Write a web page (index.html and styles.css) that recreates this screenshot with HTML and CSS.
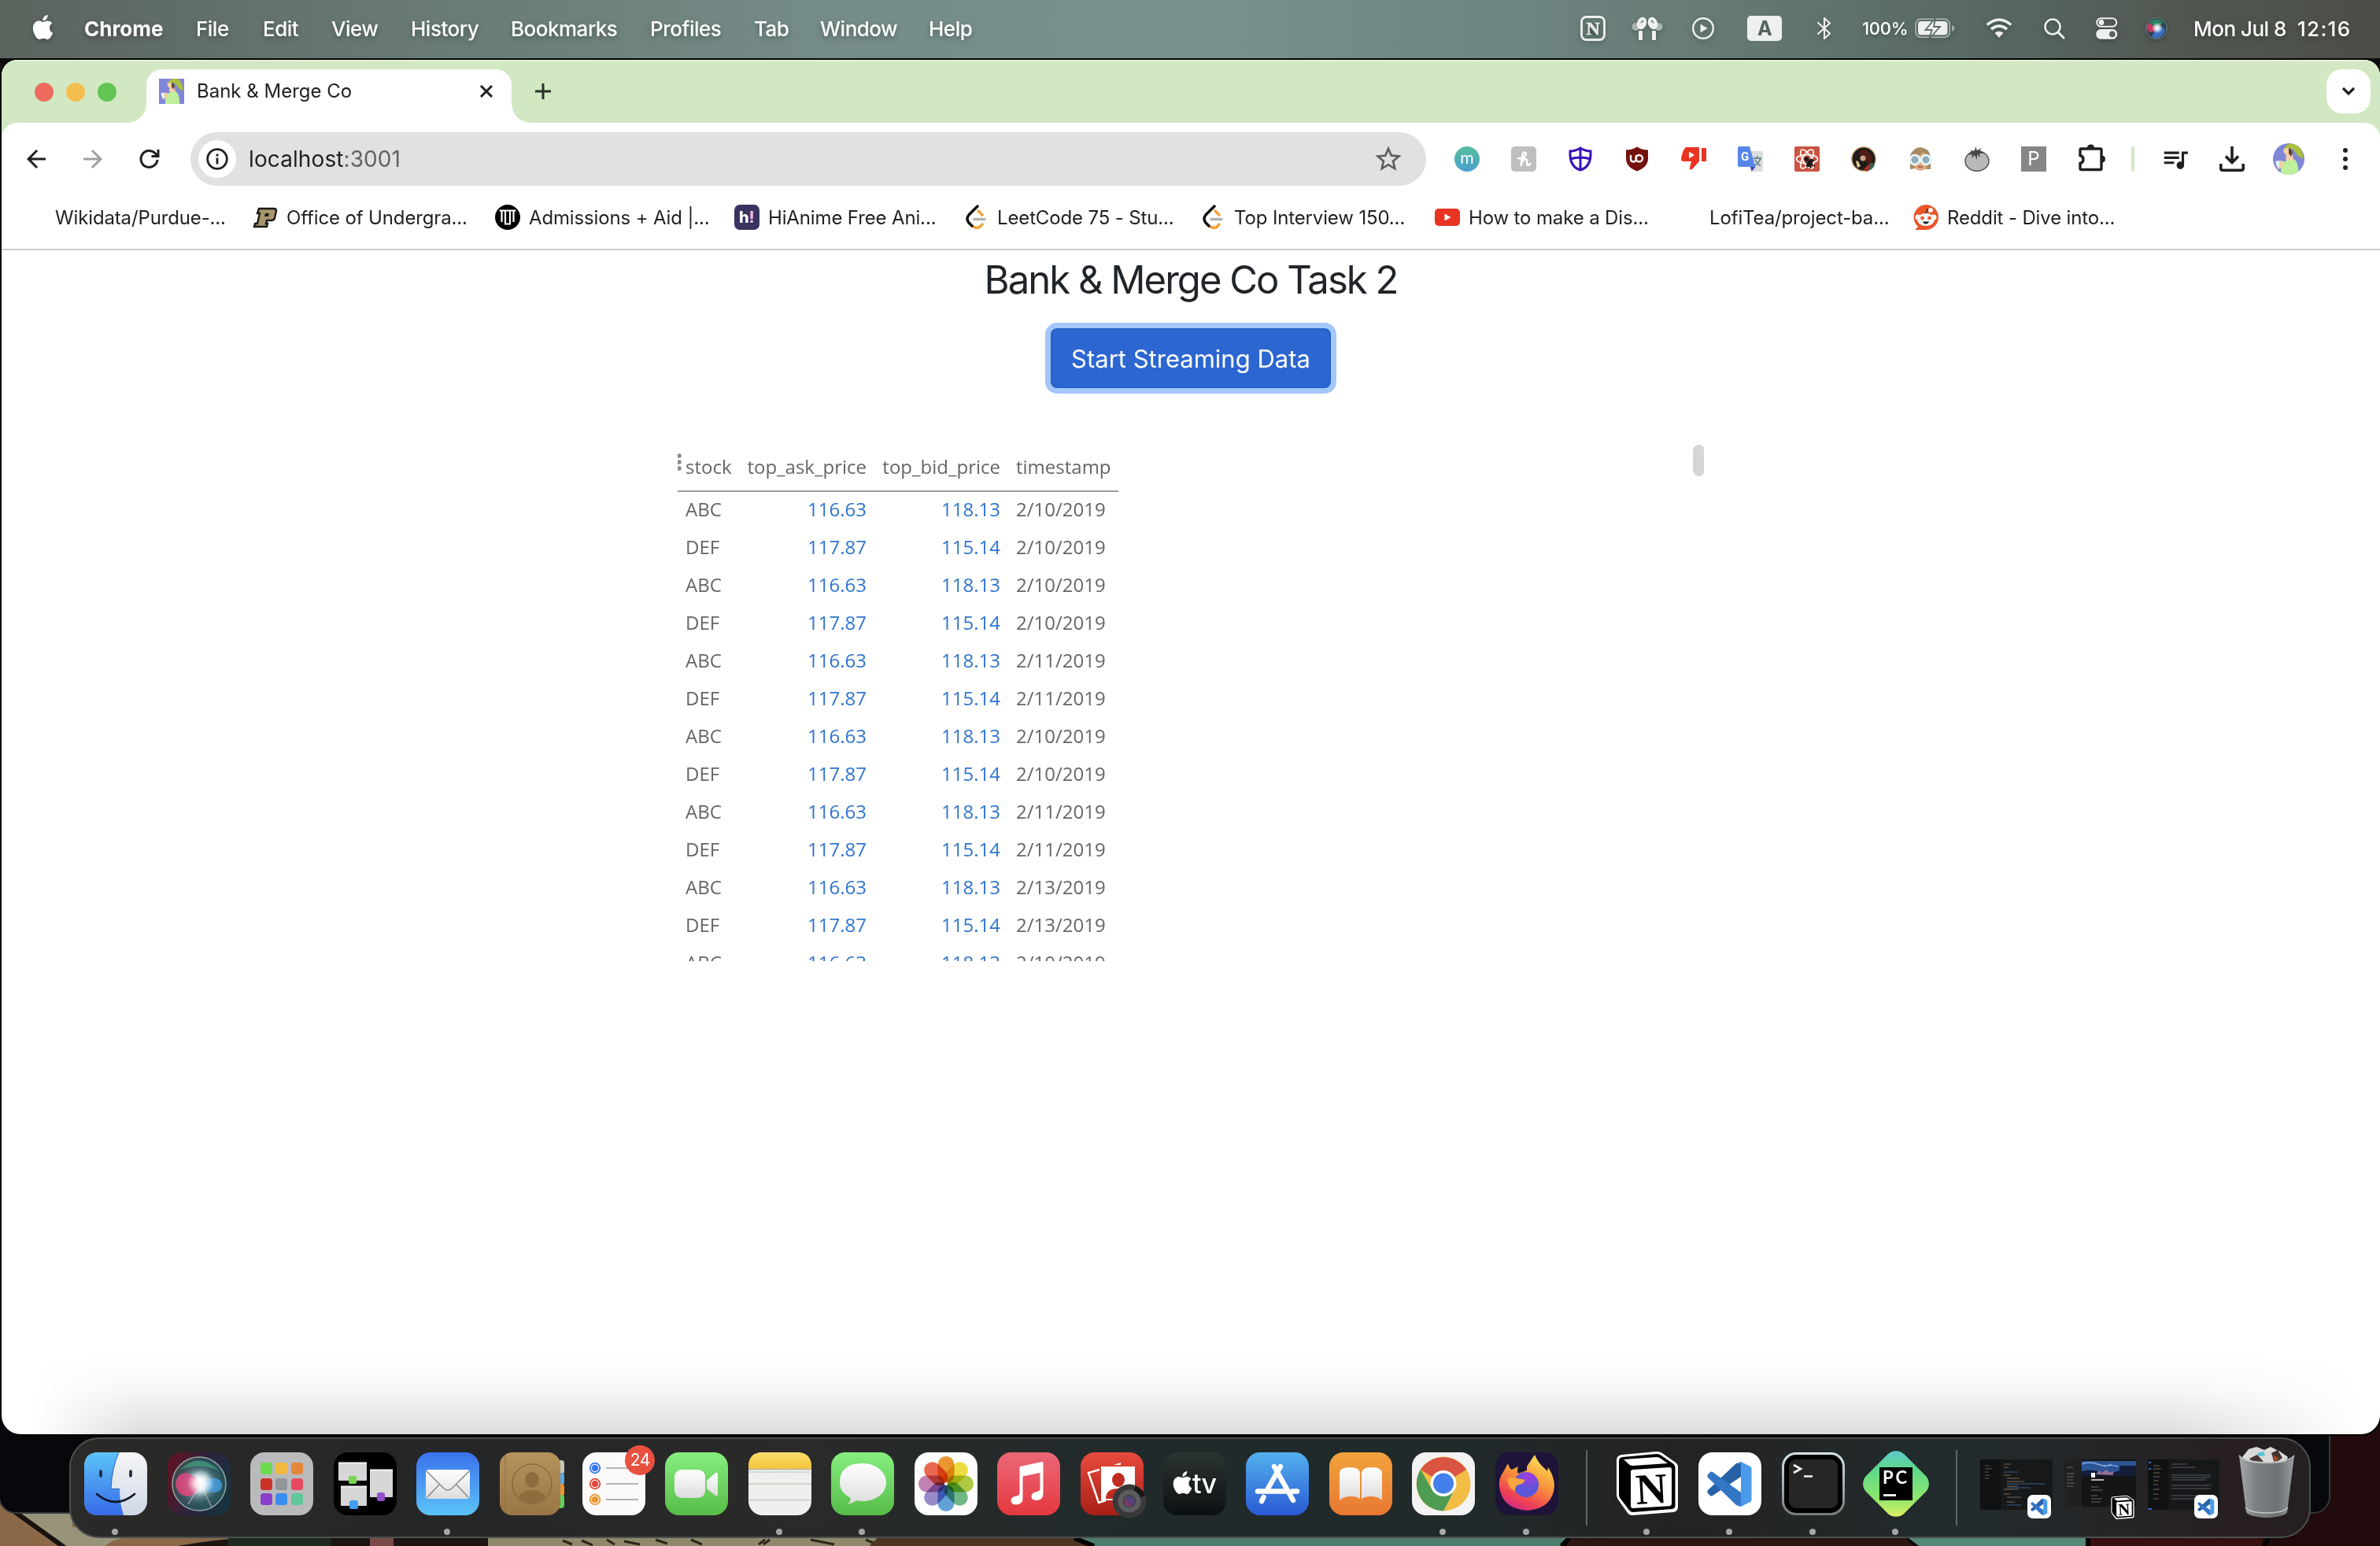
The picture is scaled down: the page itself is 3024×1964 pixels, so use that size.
FILE: index.html
```html
<!DOCTYPE html>
<html lang="en">
<head>
<meta charset="utf-8">
<title>Bank &amp; Merge Co</title>
<link rel="stylesheet" href="styles.css">
</head>
<body>
<svg class="defs" width="0" height="0">
  <defs>
    <linearGradient id="gBlueUp" x1="0" y1="0" x2="0" y2="1"><stop offset="0" stop-color="#3a72ec"/><stop offset="1" stop-color="#5cc3f7"/></linearGradient>
    <linearGradient id="gBlueDown" x1="0" y1="0" x2="0" y2="1"><stop offset="0" stop-color="#5cc3f7"/><stop offset="1" stop-color="#376bea"/></linearGradient>
    <linearGradient id="gGreen" x1="0" y1="0" x2="0" y2="1"><stop offset="0" stop-color="#86ee7f"/><stop offset="1" stop-color="#57bd48"/></linearGradient>
    <linearGradient id="gWhite" x1="0" y1="0" x2="0" y2="1"><stop offset="0" stop-color="#ffffff"/><stop offset="1" stop-color="#dcdcdc"/></linearGradient>
    <linearGradient id="gFace" x1="0" y1="0" x2="0" y2="1"><stop offset="0" stop-color="#f5f5f7"/><stop offset="1" stop-color="#cfd8e6"/></linearGradient>
    <linearGradient id="gBrown" x1="0" y1="0" x2="0" y2="1"><stop offset="0" stop-color="#b5935c"/><stop offset="1" stop-color="#9a7546"/></linearGradient>
    <linearGradient id="gYellow" x1="0" y1="0" x2="0" y2="1"><stop offset="0" stop-color="#f9dc6c"/><stop offset="1" stop-color="#f5c437"/></linearGradient>
    <linearGradient id="gMusic" x1="0" y1="0" x2="0" y2="1"><stop offset="0" stop-color="#ea6878"/><stop offset="1" stop-color="#e5383f"/></linearGradient>
    <linearGradient id="gRed" x1="0" y1="0" x2="0" y2="1"><stop offset="0" stop-color="#e84a3c"/><stop offset="1" stop-color="#a81f16"/></linearGradient>
    <linearGradient id="gTv" x1="0" y1="0" x2="0" y2="1"><stop offset="0" stop-color="#2b3431"/><stop offset="1" stop-color="#0c1012"/></linearGradient>
    <linearGradient id="gOrange" x1="0" y1="0" x2="0" y2="1"><stop offset="0" stop-color="#f1a23b"/><stop offset="1" stop-color="#e97833"/></linearGradient>
    <linearGradient id="gStore" x1="0" y1="0" x2="0" y2="1"><stop offset="0" stop-color="#52b2ee"/><stop offset="1" stop-color="#2a58d4"/></linearGradient>
    <linearGradient id="gSiri" x1="0" y1="0.3" x2="1" y2="0.7"><stop offset="0" stop-color="#5d1424"/><stop offset=".5" stop-color="#2c2440"/><stop offset="1" stop-color="#17333f"/></linearGradient>
    <radialGradient id="gOrb"><stop offset="0" stop-color="#ffffff"/><stop offset=".25" stop-color="#b9e0e6" stop-opacity=".9"/><stop offset=".7" stop-color="#3f7f7d" stop-opacity=".6"/><stop offset="1" stop-color="#2a6a66" stop-opacity=".5"/></radialGradient>
    <radialGradient id="gGlow"><stop offset="0" stop-color="#fff"/><stop offset=".35" stop-color="#fff" stop-opacity=".85"/><stop offset="1" stop-color="#fff" stop-opacity="0"/></radialGradient>
    <linearGradient id="gFox" x1="0.8" y1="0" x2="0.3" y2="1"><stop offset="0" stop-color="#fde75a"/><stop offset=".45" stop-color="#f7953a"/><stop offset=".8" stop-color="#ee4253"/><stop offset="1" stop-color="#cf2a86"/></linearGradient>
    <radialGradient id="gFoxIn" cx=".6" cy=".2"><stop offset="0" stop-color="#a63be0"/><stop offset="1" stop-color="#5b56d8"/></radialGradient>
    <linearGradient id="gPc" x1="0" y1="0" x2="1" y2="1"><stop offset="0" stop-color="#5bc2dd"/><stop offset=".3" stop-color="#5fd98c"/><stop offset=".7" stop-color="#8de66c"/><stop offset="1" stop-color="#f5f35c"/></linearGradient>
    <linearGradient id="gTerm" x1="0" y1="0" x2="0" y2="1"><stop offset="0" stop-color="#d5e6ee"/><stop offset="1" stop-color="#77797b"/></linearGradient>
    <linearGradient id="gTeal" x1="0" y1="0" x2="0" y2="1"><stop offset="0" stop-color="#55bd9c"/><stop offset="1" stop-color="#4aa0cf"/></linearGradient>
    <linearGradient id="gTrash" x1="0" y1="0" x2="1" y2="0"><stop offset="0" stop-color="#a5a9ab"/><stop offset=".3" stop-color="#7d8183"/><stop offset=".7" stop-color="#6d7173"/><stop offset="1" stop-color="#999d9f"/></linearGradient>
    <symbol id="apple" viewBox="0 0 24 24"><path d="M12.152 6.896c-.948 0-2.415-1.078-3.960-1.040-2.040.027-3.910 1.183-4.961 3.014-2.117 3.675-.546 9.103 1.519 12.090 1.013 1.454 2.208 3.090 3.792 3.039 1.520-.065 2.090-.987 3.935-.987 1.831 0 2.350.987 3.960.948 1.637-.026 2.676-1.480 3.676-2.948 1.156-1.688 1.636-3.325 1.662-3.415-.039-.013-3.182-1.221-3.220-4.857-.026-3.040 2.480-4.494 2.597-4.559-1.429-2.090-3.623-2.324-4.390-2.376-2-.156-3.675 1.090-4.610 1.090zM15.530 3.830c.843-1.012 1.400-2.427 1.245-3.830-1.207.052-2.662.805-3.532 1.818-.78.896-1.454 2.338-1.273 3.714 1.338.104 2.715-.688 3.559-1.701"/></symbol>
    <symbol id="vscode" viewBox="0 0 80 80"><rect width="80" height="80" rx="18" fill="#fff"/><path d="M12 48L48 14l6-1v18L18 55q-2 1-3 0l-3-3q-1.500-2 0-4z" fill="#2762a6"/><path d="M12 32q-1.500-2 0-4l3-3q2-1 3 0L54 51v18l-6-2z" fill="#3476c6"/><path d="M54 12l12 6q1.500 1 1.500 3v39q0 2-1.500 3l-12 6q-2 .5-3-1.500 3 1 3-3V16.500q0-4-3-3 1-2 3-1.500z" fill="#4a9aea"/></symbol>
    <symbol id="notion" viewBox="0 0 80 84"><path d="M8 5l44-4q4 0 7 2l17 12q3 2 3 6v50q0 6-6 7l-52 4q-4 0-6-3L3 62q-2-3-2-6V12q0-6 7-7z" fill="#fff"/><path d="M9 8l43-4q3 0 5 1.500l16 11q2.500 2 2.500 5v48q0 4-4 4.500L22 78q-3 0-5-2.500L6 61q-2-2-2-5V13q0-4.500 5-5z" fill="#000"/><path d="M10 11l42-3q2 0 4 1.200L66 16l-44 3q-3 0-5-1.500z" fill="#fff"/><path d="M22 24l46-3q3 0 3 3v43q0 3-3 3.200L22 73q-3 0-3-3V27q0-3 3-3z" fill="#fff"/><text x="45" y="67" font-family="Liberation Serif, serif" font-weight="700" font-size="55" text-anchor="middle" transform="rotate(-3 45 48)">N</text></symbol>
    <symbol id="avatar" viewBox="0 0 40 40"><rect width="40" height="40" fill="#7f86d8"/><path d="M10 40q-1-15 7-18l9-2q6 2 7 20z" fill="#bdf09a"/><path d="M5 24q5-3 9-1l-2 8-6 2z" fill="#f3cfa6"/><path d="M13 8q6-5 11 0l2 13q-8 3-10-1l1-5q-4-3-4-7z" fill="#f3cfa6"/><path d="M14 6Q24-6 32 2q7 8 6 17-6-1-9-7-4-6-8-6-4 0-7 1z" fill="#a9bf3d"/><path d="M20 6q4 1 5 6l-2 5-3-4z" fill="#5b4636"/><path d="M3 23l5-1v8H5z" fill="#e5f5ff"/></symbol>
    <symbol id="leet" viewBox="0 0 32 32"><path d="M19 8l5 5M24 25q-5 7-11 3" fill="none" stroke="#f0a23a" stroke-width="3.500" stroke-linecap="round"/><path d="M14 18.500h13" stroke="#b3b3b3" stroke-width="3.600" stroke-linecap="round"/><path d="M18 2L7 13q-4 5 0 10l4 4" fill="none" stroke="#111" stroke-width="3.500" stroke-linecap="round"/></symbol>
  </defs>
</svg>

<svg class="wallpaper" viewBox="0 0 3024 1964">
  <rect width="3024" height="1964" fill="#0b0a0c"/>
  <rect y="80" width="4" height="120" fill="#1b1413"/><rect y="200" width="4" height="220" fill="#52685f"/>
  <rect y="1900" width="420" height="64" fill="#8b6848"/>
  <path d="M20 1922H92V1940L170 1950 120 1964H80z" fill="#97947a"/><path d="M18 1920l64 46" stroke="#17120d" stroke-width="6"/>
  <path d="M90 1950h65l-22 14H90z" fill="#97947a"/>
  <path d="M225 1964q60-10 90-10h400v10z" fill="#1c1514"/><path d="M290 1954h130v10H290z" fill="#1e2a20"/><path d="M470 1954h30v10h-30z" fill="#7a4b47"/>
  <path d="M620 1954H1115l-10 10H620z" fill="#8f896c"/>
  <path d="M715 1957l12 5m12-5l14 6m18-7l10 6m12-4l20 4m20-6l15 5m30-5l14 6m80-6l-8 6m14-6l-8 6m60-6l30 6m40-6l14 6" stroke="#2c271c" stroke-width="3"/>
  <path d="M1115 1954h275v10h-285z" fill="#4e3421"/>
  <path d="M1365 1954H1995l-12 10H1390z" fill="#4d7e70"/><path d="M1365 1954l25 10M1996 1952l-12 12" stroke="#000" stroke-width="6"/>
  <path d="M1996 1954h425l10 10H1990z" fill="#2b170f"/>
  <path d="M2425 1954h225v10h-212z" fill="#55897a"/><path d="M2650 1950h6v14h-6z" fill="#000"/>
  <path d="M2656 1954h370v10h-370z" fill="#35100f"/>
  <path d="M2900 1780h124v184h-150z" fill="#210a0b"/><path d="M2884 1952l-8 12" stroke="#000" stroke-width="5"/>
</svg>
<div class="back-window"></div>

<header class="menubar">
  <svg class="m-apple" width="31" height="31" fill="#fff"><use href="#apple"/></svg>
  <b>Chrome</b><span>File</span><span>Edit</span><span>View</span><span>History</span><span>Bookmarks</span><span>Profiles</span><span>Tab</span><span>Window</span><span>Help</span>
  <svg width="32" height="32" viewBox="0 0 32 32"><rect x="1.500" y="1.500" width="29" height="29" rx="6" fill="none" stroke="#eef0ef" stroke-width="2.800"/><text x="16" y="24" text-anchor="middle" font-family="Liberation Serif, serif" font-weight="700" font-size="24" fill="#eef0ef" stroke="#eef0ef" stroke-width=".6">N</text></svg>
  <svg width="42" height="34" viewBox="0 0 42 34"><g fill="#a9b5b1"><circle cx="6.500" cy="15" r="5"/><circle cx="35.500" cy="15" r="5"/></g><g fill="#eef0ef"><ellipse cx="14" cy="10.500" rx="6" ry="8" transform="rotate(20 14 10.500)"/><ellipse cx="28" cy="10.500" rx="6" ry="8" transform="rotate(-20 28 10.500)"/><rect x="10" y="20" width="5" height="12" rx="1"/><rect x="27" y="20" width="5" height="12" rx="1"/></g><path d="M13 10l3-3M29 10l-3-3" stroke="#5d6e69" stroke-width="1.500"/></svg>
  <svg width="28" height="28" viewBox="0 0 28 28"><circle cx="14" cy="14" r="12.800" fill="none" stroke="#eef0ef" stroke-width="2.400"/><path d="M10.500 8.500v11l9-5.500z" fill="#eef0ef"/></svg>
  <div class="input-key">A</div>
  <svg width="18" height="30" viewBox="0 0 18 30"><path d="M1 8l15 13.500L9 28V2l7 6.500L1 22" fill="none" stroke="#eef0ef" stroke-width="2.200" stroke-linejoin="round" stroke-linecap="round"/></svg>
  <span class="percent">100%</span>
  <svg width="52" height="26" viewBox="0 0 52 26"><rect x="1.200" y="1.200" width="43" height="23" rx="6.500" fill="none" stroke="#a3aca9" stroke-width="2"/><path d="M47 9q4 1.500 3.500 4 0 2.500-3.500 4z" fill="#a3aca9"/><rect x="4" y="4" width="37.500" height="17.500" rx="4" fill="#eef0ef"/><path d="M26 0L13.500 15h8L18.500 26 32 11h-8z" fill="#eef0ef" stroke="#5d6b67" stroke-width="1.800"/></svg>
  <svg width="34" height="26" viewBox="0 0 34 26"><path d="M1.800 8.500q15.200-13 30.400 0M7 14q10-8 20 0" fill="none" stroke="#eef0ef" stroke-width="3.600"/><path d="M11.500 18.700q5.500-4 11 0L17 25z" fill="#eef0ef"/></svg>
  <svg width="27" height="27" viewBox="0 0 27 27"><circle cx="11" cy="11" r="9.500" fill="none" stroke="#eef0ef" stroke-width="2.500"/><path d="M18 18l7 7" stroke="#eef0ef" stroke-width="3" stroke-linecap="round"/></svg>
  <svg width="28" height="28" viewBox="0 0 28 28"><rect x="1.200" y="1.200" width="25" height="10.600" rx="5.300" fill="none" stroke="#eef0ef" stroke-width="2"/><circle cx="7" cy="6.500" r="3.400" fill="#eef0ef"/><rect x=".2" y="15" width="27" height="12.800" rx="6.400" fill="#eef0ef"/><circle cx="20.800" cy="21.400" r="3.800" fill="#5a6561"/></svg>
  <svg width="28" height="28" viewBox="0 0 28 28"><circle cx="14" cy="14" r="13.400" fill="#32414f" stroke="#7e9596" stroke-width=".8"/><path d="M14 14q-5 8-11 3-4-6 2-10z" fill="#c23a62"/><path d="M14 14L5 6a13 13 0 0 1 18 0z" fill="#2c8262"/><path d="M14 14q8-4 11 2-2 8-9 10-6 1-8-2z" fill="#3a6fc2"/><circle cx="15" cy="13.500" r="7" fill="url(#gGlow)"/></svg>
  <span class="date">Mon Jul 8</span><span class="clock">12:16</span>
</header>

<section class="window">
  <div class="tabstrip">
    <div class="lights"><i class="red"></i><i class="amber"></i><i class="green"></i></div>
    <div class="tab"><svg width="32" height="32"><use href="#avatar"/></svg><span>Bank &amp; Merge Co</span>
      <svg class="close" width="18" height="18" viewBox="0 0 18 18"><path d="M2 2l14 14M16 2L2 16" stroke="#1f2023" stroke-width="3"/></svg></div>
    <svg class="plus" width="22" height="22" viewBox="0 0 22 22"><path d="M11 1v20M1 11h20" stroke="#2b3029" stroke-width="3"/></svg>
    <div class="tabsearch"><svg width="18" height="12" viewBox="0 0 18 12"><path d="M2 2l7 7 7-7" fill="none" stroke="#1f2023" stroke-width="3.200"/></svg></div>
  </div>

  <div class="toolbar">
    <div class="slot"><svg width="36" height="36" viewBox="0 0 24 24"><path fill="#1f2023" d="M20 11H7.830l5.590-5.590L12 4l-8 8 8 8 1.410-1.410L7.830 13H20v-2z"/></svg></div>
    <div class="slot"><svg width="36" height="36" viewBox="0 0 24 24"><path fill="#a0a0a0" d="M4 13h12.170l-5.590 5.590L12 20l8-8-8-8-1.410 1.410L16.170 11H4z"/></svg></div>
    <div class="slot"><svg width="26" height="26" viewBox="0 0 26 26"><path d="M23 14a10.500 10.500 0 1 1-3-8.500l3 3" fill="none" stroke="#1f2023" stroke-width="3"/><path d="M25.500 1v10h-10V8h7V1z" fill="#1f2023"/></svg></div>
    <div class="omnibox">
      <div class="info"><svg width="28" height="28" viewBox="0 0 28 28"><circle cx="14" cy="14" r="12.300" fill="none" stroke="#1f2023" stroke-width="2.800"/><path d="M14 12.500v8M14 7.500v3" stroke="#1f2023" stroke-width="2.800"/></svg></div>
      <span class="url">localhost<em>:3001</em></span>
      <svg class="star" width="40" height="40" viewBox="0 0 24 24"><path fill="#5d6064" d="M22 9.240l-7.190-.62L12 2 9.190 8.630 2 9.240l5.460 4.730L5.820 21 12 17.270 18.180 21l-1.630-7.030L22 9.240zM12 15.400l-3.760 2.270 1-4.280-3.320-2.880 4.380-.38L12 6.100l1.710 4.040 4.380.38-3.320 2.880 1 4.280L12 15.400z"/></svg>
    </div>
    <div class="slot"><svg width="32" height="32" viewBox="0 0 32 32"><circle cx="16" cy="16" r="16" fill="url(#gTeal)"/><text x="16" y="22" text-anchor="middle" font-family="Inter, sans-serif" font-size="20" fill="#fff">m</text></svg></div>
    <div class="slot"><svg width="32" height="32" viewBox="0 0 32 32"><rect width="32" height="32" rx="5" fill="#bfbfbf"/><path d="M9 15q5 1 9-3 2-4-1-4.500-3 .5-3 7.500l-1.500 9q2-8 5.500-8 2.500 0 2 3.500-.5 4.500 1.500 4.500 1.500 0 3-2" fill="none" stroke="#fff" stroke-width="2.600" stroke-linecap="round" stroke-linejoin="round"/></svg></div>
    <div class="slot"><svg width="32" height="32" viewBox="0 0 32 32"><path d="M16 2q6 4 13 4 1 20-13 24Q2 26 3 6q7 0 13-4zM16 2v28M3 16q7-2 13-2t13 2" fill="none" stroke="#3a12b8" stroke-width="3"/></svg></div>
    <div class="slot"><svg width="32" height="32" viewBox="0 0 32 32"><path d="M16 .5q6 4 14 4v11Q30 26 16 31.500 2 26 2 15.500v-11q8 0 14-4z" fill="#75120f"/><path d="M8 11v4.500q0 4 3.500 4T15 15.500V11" fill="none" stroke="#fff" stroke-width="2.400"/><circle cx="18.800" cy="15.200" r="4.200" fill="none" stroke="#fff" stroke-width="2.400"/></svg></div>
    <div class="slot"><svg width="32" height="32" viewBox="0 0 32 32"><path d="M6 1h17v18l-9 10q-3 2-3-2l2-8H3q-3 0-3-3Q2 4 6 1zM26 2h6v17h-6z" fill="#e93423"/><path d="M10 6.500v9l7-4.500z" fill="#fff"/></svg></div>
    <div class="slot"><svg width="32" height="32" viewBox="0 0 32 32"><path d="M14 6h16q2 0 2 2v22q0 2-2 2H18z" fill="#dcdcdc"/><path d="M20 15h10M25 12v3M29 15q-2 6-8 10M22 17q3 5 7 8" fill="none" stroke="#6d8792" stroke-width="1.800"/><path d="M2 0h13l7.500 26H2q-2 0-2-2V2q0-2 2-2z" fill="#5686e8"/><path d="M16 26h6.500l-5 6z" fill="#3450ad"/><text x="4" y="18" font-family="Roboto, sans-serif" font-weight="700" font-size="15" fill="#fff">G</text></svg></div>
    <div class="slot"><svg width="32" height="32" viewBox="0 0 32 32"><rect width="32" height="32" rx="2" fill="#ca5443"/><g fill="none" stroke="#fff" stroke-width="1.600"><ellipse cx="16" cy="16" rx="13.500" ry="5.500"/><ellipse cx="16" cy="16" rx="13.500" ry="5.500" transform="rotate(60 16 16)"/><ellipse cx="16" cy="16" rx="13.500" ry="5.500" transform="rotate(120 16 16)"/></g><ellipse cx="19.500" cy="21" rx="3" ry="6" transform="rotate(35 19.500 21)" fill="#191716"/><circle cx="15.500" cy="16" r="3" fill="#191716"/><path d="M14 20l12 5M15 25l10-8M20 28l2-11" stroke="#191716" stroke-width="1.500"/></svg></div>
    <div class="slot"><svg width="32" height="32" viewBox="0 0 32 32"><circle cx="16" cy="16" r="15.200" fill="#231c19" stroke="#c9ae78" stroke-width="1.400"/><path d="M9 7q8-6 14 1 5 6 3 14l-7-2z" fill="#4d1d18"/><circle cx="15" cy="15" r="3.500" fill="#caa184"/><path d="M22 31q-6-6 4-10l4 2q-2 6-8 8z" fill="#2e6656"/><path d="M15 30l8-8 2 2-4 8z" fill="#a62f29"/><path d="M6 18l3 1 3 6-4 2z" fill="#e8cf9c"/></svg></div>
    <div class="slot"><svg width="32" height="32" viewBox="0 0 32 32"><path d="M3 29V12Q6 2 16 1q11 1 13 12v16h-5l-8-2z" fill="#a78a63"/><path d="M6 13q9 0 14-6 3 5 6 6v8q-2 9-10 10Q8 30 6 21z" fill="#dba87f"/><g fill="#8fb0be" stroke="#eef7fa" stroke-width="2.600"><circle cx="9" cy="17" r="6"/><circle cx="23" cy="17" r="6"/></g><path d="M13 26h6" stroke="#9a4d3c" stroke-width="1.600"/></svg></div>
    <div class="slot"><svg width="32" height="32" viewBox="0 0 32 32"><ellipse cx="16" cy="18.500" rx="15" ry="12.800" fill="#b9b9b9" stroke="#4f4f4f" stroke-width="1.500"/><path d="M14 0l2 5 6-3-3 4 6 3-6 0 1 5-4-4 0 7-3-6-4 4 1-5-5 1 4-4-2-2 6 1z" fill="#484848"/></svg></div>
    <div class="slot"><div class="pbox">P</div></div>
    <div class="slot"><svg class="puzzle" width="36" height="36" viewBox="0 0 36 36"><path d="M4.500 6h24q1.500 0 1.500 1.500V31q0 1.500-1.500 1.500h-24Q3 32.500 3 31v-6.500q4-1 4-5t-4-5v-7Q3 6 4.500 6z" fill="none" stroke="#1f2023" stroke-width="3.400"/><path d="M12 5q0-4.500 4.500-4.500T21 5zM30 14.500q5 0 5 4.500t-5 4.500z" fill="#1f2023"/></svg></div>
    <div class="divider"></div>
    <div class="slot"><svg width="38" height="38" viewBox="0 0 24 24"><path fill="#1f2023" d="M15 6H3v2h12V6zm0 4H3v2h12v-2zM3 16h8v-2H3v2zM17 6v8.180c-.31-.11-.65-.18-1-.18-1.660 0-3 1.340-3 3s1.340 3 3 3 3-1.340 3-3V8h3V6h-5z"/></svg></div>
    <div class="slot"><svg width="32" height="32" viewBox="0 0 32 32"><path d="M16 0v21M8 12.500l8 8 8-8" fill="none" stroke="#1f2023" stroke-width="3.600"/><path d="M1.800 22v6q0 2.200 2.200 2.200h24q2.200 0 2.200-2.200v-6" fill="none" stroke="#1f2023" stroke-width="3.600"/></svg></div>
    <div class="slot"><svg class="round" width="40" height="40"><use href="#avatar"/></svg></div>
    <div class="slot"><svg width="6" height="28" viewBox="0 0 6 28" fill="#1f2023"><circle cx="3" cy="3" r="3"/><circle cx="3" cy="14" r="3"/><circle cx="3" cy="25" r="3"/></svg></div>
  </div>

  <nav class="bookmarks">
    <a><i></i>Wikidata/Purdue-...</a>
    <a><svg width="32" height="32" viewBox="0 0 32 32"><path d="M8 5h19q3 0 3 3l-2 9q-1 3-4 3h-6l-1 4h2l-1 4H2l1-4h3l3-13H6z" fill="#a8976c" stroke="#1b1b1b" stroke-width="2.400"/><path d="M16 11h5l-1 4h-5z" fill="#1b1b1b"/></svg>Office of Undergra...</a>
    <a><svg width="32" height="32" viewBox="0 0 32 32"><circle cx="16" cy="16" r="16" fill="#000"/><path d="M5.500 7.500h21M8.500 7v15M23.500 7v15M13 7v17.500h6V7" fill="none" stroke="#fff" stroke-width="2.200"/></svg>Admissions + Aid |...</a>
    <a><svg width="32" height="32" viewBox="0 0 32 32"><rect width="32" height="32" rx="7" fill="#38345f"/><text x="6" y="23" font-family="Inter, sans-serif" font-weight="800" font-size="20" fill="#fff">h<tspan fill="#f5b6dc">!</tspan></text></svg>HiAnime Free Ani...</a>
    <a><svg width="32" height="32"><use href="#leet"/></svg>LeetCode 75 - Stu...</a>
    <a><svg width="32" height="32"><use href="#leet"/></svg>Top Interview 150...</a>
    <a><svg width="32" height="32" viewBox="0 0 32 32"><rect y="5" width="32" height="22" rx="5" fill="#e93423"/><path d="M12.500 11.500v9l8-4.500z" fill="#fff"/></svg>How to make a Dis...</a>
    <a><i></i>LofiTea/project-ba...</a>
    <a><svg width="32" height="32" viewBox="0 0 32 32"><path d="M16 0a16 16 0 1 1 0 32H2l4-4A16 16 0 0 1 16 0z" fill="#eb5528"/><circle cx="6" cy="16" r="3.500" fill="#f3f6f8"/><circle cx="26" cy="16" r="3.500" fill="#f3f6f8"/><ellipse cx="16" cy="19" rx="11" ry="8" fill="#f3f6f8"/><path d="M16 11l2-5 4 1" fill="none" stroke="#222" stroke-width="1.300"/><circle cx="22" cy="7" r="3" fill="#f3f6f8"/><circle cx="11.500" cy="17" r="2.300" fill="#eb5528"/><circle cx="20.500" cy="17" r="2.300" fill="#eb5528"/><path d="M12 21.500h8q-1 3-4 3t-4-3z" fill="#222"/></svg>Reddit - Dive into...</a>
  </nav>

  <main class="page">
    <h1>Bank &amp; Merge Co Task 2</h1>
    <button class="start">Start Streaming Data</button>
    <div class="viewer">
      <svg class="grip" width="6" height="24" viewBox="0 0 6 24" fill="#8b8b8b"><circle cx="3" cy="3" r="2.800"/><circle cx="3" cy="11" r="2.800"/><circle cx="3" cy="19" r="2.800"/></svg>
      <div class="table">
        <div class="row head"><span>stock</span><span>top_ask_price</span><span>top_bid_price</span><span>timestamp</span></div>
        <div class="row"><span>ABC</span><b>116.63</b><b>118.13</b><span>2/10/2019</span></div>
        <div class="row"><span>DEF</span><b>117.87</b><b>115.14</b><span>2/10/2019</span></div>
        <div class="row"><span>ABC</span><b>116.63</b><b>118.13</b><span>2/10/2019</span></div>
        <div class="row"><span>DEF</span><b>117.87</b><b>115.14</b><span>2/10/2019</span></div>
        <div class="row"><span>ABC</span><b>116.63</b><b>118.13</b><span>2/11/2019</span></div>
        <div class="row"><span>DEF</span><b>117.87</b><b>115.14</b><span>2/11/2019</span></div>
        <div class="row"><span>ABC</span><b>116.63</b><b>118.13</b><span>2/10/2019</span></div>
        <div class="row"><span>DEF</span><b>117.87</b><b>115.14</b><span>2/10/2019</span></div>
        <div class="row"><span>ABC</span><b>116.63</b><b>118.13</b><span>2/11/2019</span></div>
        <div class="row"><span>DEF</span><b>117.87</b><b>115.14</b><span>2/11/2019</span></div>
        <div class="row"><span>ABC</span><b>116.63</b><b>118.13</b><span>2/13/2019</span></div>
        <div class="row"><span>DEF</span><b>117.87</b><b>115.14</b><span>2/13/2019</span></div>
        <div class="row"><span>ABC</span><b>116.63</b><b>118.13</b><span>2/10/2019</span></div>
      </div>
      <div class="thumb"></div>
    </div>
  </main>
  <div class="dock-shade"></div>
</section>

<footer class="dock">
  <div class="app on"><svg viewBox="0 0 80 80"><rect width="80" height="80" rx="18" fill="url(#gFace)"/><path d="M18 0h26q-9 20-10 46h11q0 18 5 34H18Q0 80 0 62V18Q0 0 18 0z" fill="url(#gBlueDown)"/><path d="M44 0q-9 20-10 46.500h11.500" fill="none" stroke="#2b5fb5" stroke-width="1"/><path d="M21 24v6M59 24v6" stroke="#1c2a3b" stroke-width="3.600" stroke-linecap="round"/><path d="M16 53q24 20 48 0" fill="none" stroke="#10192a" stroke-width="2.800" stroke-linecap="round"/></svg></div>
  <div class="app"><svg viewBox="0 0 80 80"><rect width="80" height="80" rx="18" fill="url(#gSiri)"/><circle cx="40" cy="40" r="34" fill="url(#gOrb)" stroke="#93aaa3" stroke-width="1.500"/><path d="M10 40q2-14 14-14 10 2 18 14-6 16-18 16-12-2-14-16z" fill="#e8467e" opacity=".8"/><path d="M41 40q16-12 25-5 6 6 1 13-8 6-16 1z" fill="#4aa4ea" opacity=".75"/><path d="M16 22q24-24 50 2-24-12-50-2z" fill="#43b184" opacity=".6"/><path d="M42 40l14 30M42 40L26 66" stroke="#dcb6c9" stroke-width="1.500" opacity=".6"/><circle cx="42" cy="39" r="17" fill="url(#gGlow)"/></svg></div>
  <div class="app"><svg viewBox="0 0 80 80"><rect width="80" height="80" rx="18" fill="#b9babc"/><g><rect x="13" y="13" width="15" height="15" rx="3.500" fill="#6cd94f"/><rect x="32" y="13" width="15" height="15" rx="3.500" fill="#f2b93f"/><rect x="52" y="13" width="15" height="15" rx="3.500" fill="#e5873a"/><rect x="13" y="33" width="15" height="15" rx="3.500" fill="#cc3226"/><rect x="32" y="33" width="15" height="15" rx="3.500" fill="#909698"/><rect x="52" y="33" width="15" height="15" rx="3.500" fill="#e84b60"/><rect x="13" y="52" width="15" height="15" rx="3.500" fill="#8c3fcb"/><rect x="32" y="52" width="15" height="15" rx="3.500" fill="#3a8df0"/><rect x="52" y="52" width="15" height="15" rx="3.500" fill="#62c79c"/></g></svg></div>
  <div class="app"><svg viewBox="0 0 80 80"><rect width="80" height="80" rx="18" fill="#000"/><g fill="#d6d6d6"><rect x="6" y="13" width="36" height="23" rx="1"/><rect x="46" y="22" width="29" height="35" rx="1"/><rect x="9" y="43" width="33" height="25" rx="1"/></g><path d="M6 13.500h36M46 22.500h29M9 43.500h33" stroke="#f4f4f4" stroke-width="2"/><rect x="19" y="30" width="10" height="10" rx="2.500" fill="#75d84f"/><rect x="55" y="51" width="10" height="11" rx="2.500" fill="#9450cc"/><rect x="20" y="61" width="11" height="11" rx="2.500" fill="#429df0"/></svg></div>
  <div class="app on"><svg viewBox="0 0 80 80"><rect width="80" height="80" rx="18" fill="url(#gBlueUp)"/><rect x="12" y="22" width="56" height="37" rx="4" fill="url(#gWhite)"/><path d="M14 57l16-17M66 57L50 40M13 24l22 22q5 4 10 0l22-22" fill="none" stroke="#8a8a8a" stroke-width="1.600"/></svg></div>
  <div class="app"><svg viewBox="0 0 80 80"><rect x="70" y="10" width="12" height="18" rx="4" fill="#c4c4bc"/><rect x="70" y="26" width="12" height="16" rx="4" fill="#5aa6dc"/><rect x="70" y="40" width="12" height="16" rx="4" fill="#ec9433"/><rect x="70" y="54" width="12" height="17" rx="4" fill="#5fcf5a"/><rect width="77" height="80" rx="16" fill="url(#gBrown)"/><path d="M7 3v74" stroke="#93703f" stroke-width="1"/><g fill="none" stroke="#8b6a3c" stroke-width="1.500"><circle cx="41" cy="40" r="25"/></g><ellipse cx="41" cy="35" rx="9" ry="10" fill="#8f6c3e"/><path d="M23 58q6-10 18-10t18 10q-8 7-18 7t-18-7z" fill="#8f6c3e"/></svg></div>
  <div class="app"><svg viewBox="0 0 80 80"><rect width="80" height="80" rx="18" fill="#fbfaf8"/><path d="M30 20h42M30 40h41M30 60h41" stroke="#b5b5b9" stroke-width="1.800"/><g fill="none" stroke-width="1.800"><circle cx="16" cy="20" r="6.300" stroke="#3778f0"/><circle cx="16" cy="40" r="6.300" stroke="#e5493c"/><circle cx="16" cy="60" r="6.300" stroke="#e8962f"/></g><circle cx="16" cy="20" r="4.300" fill="#3778f0"/><circle cx="16" cy="40" r="4.300" fill="#e5493c"/><circle cx="16" cy="60" r="4.300" fill="#e8962f"/></svg><div class="badge">24</div></div>
  <div class="app"><svg viewBox="0 0 80 80"><rect width="80" height="80" rx="18" fill="url(#gGreen)"/><rect x="12" y="22" width="39" height="36" rx="9" fill="url(#gWhite)"/><path d="M53 36l11-10q3-1 3 2v25q0 3-3 2L53 46z" fill="url(#gWhite)"/></svg></div>
  <div class="app on"><svg viewBox="0 0 80 80"><rect width="80" height="80" rx="18" fill="#f0efed"/><path d="M18 0h44q18 0 18 18v3H0v-3Q0 0 18 0z" fill="url(#gYellow)"/><path d="M0 21.500h80" stroke="#b9b5a8" stroke-width="1.500"/><path d="M1 25h78" stroke="#b3b3b3" stroke-width="1.500" stroke-dasharray="1.500 1.500"/><path d="M0 40h80M0 60.500h80" stroke="#d3d2cf" stroke-width="1.800"/></svg></div>
  <div class="app on"><svg viewBox="0 0 80 80"><rect width="80" height="80" rx="18" fill="url(#gGreen)"/><path d="M40 14c17 0 30 11 30 24.500S57 62 40 62q-5 0-8-1-5 4-11 5 4-4 4-8Q11 51 11 38.500 11 14 40 14z" fill="url(#gWhite)"/></svg></div>
  <div class="app"><svg viewBox="0 0 80 80"><rect width="80" height="80" rx="18" fill="#fdfdfd"/><g class="petals"><rect x="29.500" y="5" width="21" height="34" rx="10.500" fill="#ec9733"/><rect x="29.500" y="5" width="21" height="34" rx="10.500" fill="#eede3f" transform="rotate(45 40 40)"/><rect x="29.500" y="5" width="21" height="34" rx="10.500" fill="#b0cc45" transform="rotate(90 40 40)"/><rect x="29.500" y="5" width="21" height="34" rx="10.500" fill="#71b987" transform="rotate(135 40 40)"/><rect x="29.500" y="5" width="21" height="34" rx="10.500" fill="#65a2da" transform="rotate(180 40 40)"/><rect x="29.500" y="5" width="21" height="34" rx="10.500" fill="#9a8acb" transform="rotate(225 40 40)"/><rect x="29.500" y="5" width="21" height="34" rx="10.500" fill="#c583b3" transform="rotate(270 40 40)"/><rect x="29.500" y="5" width="21" height="34" rx="10.500" fill="#ea6a50" transform="rotate(315 40 40)"/></g><circle cx="40" cy="40" r="2" fill="#fff"/></svg></div>
  <div class="app"><svg viewBox="0 0 80 80"><rect width="80" height="80" rx="18" fill="url(#gMusic)"/><path d="M29 18l28-6q1.500 0 1.500 1.500V53q0 7-8 8-7 0-7-5t7-6q4-1 4-4V26l-22 4.500V59q0 7-8 7.500-7 0-7-5.500 0-4.500 7-5.500 4-.5 4-4V20q0-1.500.5-2z" fill="#fff"/></svg></div>
  <div class="app"><svg viewBox="0 0 86 86" class="wide"><rect width="80" height="80" rx="18" fill="url(#gRed)"/><path d="M24 22L10 26l13 38 9-3" fill="none" stroke="#fff" stroke-width="2.500"/><path d="M42 16l9-3v3z" fill="#fff"/><rect x="26" y="18" width="43" height="43" fill="#fff"/><ellipse cx="48" cy="35" rx="8" ry="9" fill="#c02c20"/><path d="M32 59q0-13 16-13t16 10v3z" fill="#c02c20"/><circle cx="62" cy="62" r="21.500" fill="#39393a"/><path d="M62 62l8-19q9 4 12 12z" fill="#161616"/><circle cx="62" cy="62" r="14.500" fill="#5c5d5e"/><circle cx="62" cy="62" r="8.500" fill="#454448"/><circle cx="62" cy="62" r="6.500" fill="#51417c"/><path d="M57 58a6.500 6.500 0 0 0 8 10z" fill="#7b3a68"/></svg></div>
  <div class="app"><svg viewBox="0 0 80 80"><rect width="80" height="80" rx="18" fill="url(#gTv)"/><svg x="10" y="24" width="29" height="29" fill="#fff"><use href="#apple"/></svg><text x="37" y="52" font-family="Inter, sans-serif" font-weight="500" font-size="34" textLength="31" fill="#fff">tv</text></svg></div>
  <div class="app"><svg viewBox="0 0 80 80"><rect width="80" height="80" rx="18" fill="url(#gStore)"/><g stroke="#fff" stroke-width="6.500" stroke-linecap="round" fill="none"><path d="M44 18L28 46M36 18l24 43M15 49.500h35M59 49.500h6M22.500 57l-2.500 5"/></g></svg></div>
  <div class="app"><svg viewBox="0 0 80 80"><rect width="80" height="80" rx="18" fill="url(#gOrange)"/><path d="M13 27q0-8 13-8t13 8v33q-2-4-12-4-9 0-14 5zM41 27q0-8 13-8t13 8v34q-5-5-14-5-10 0-12 4z" fill="url(#gWhite)"/></svg></div>
  <div class="app on"><svg viewBox="0 0 80 80"><rect width="80" height="80" rx="18" fill="#f3f3f3"/><circle cx="40" cy="40" r="34.500" fill="#f2bd45"/><path d="M40 40L11 22A34.500 34.500 0 0 1 69 22z" fill="#d95442"/><path d="M11 22A34.500 34.500 0 0 0 40 74.500L54 48 40 54 26 48z" fill="#4e9b54"/><circle cx="40" cy="39.500" r="16.500" fill="#fff"/><circle cx="40" cy="39.500" r="13" fill="#4480ec"/></svg></div>
  <div class="app on"><svg viewBox="0 0 80 80"><rect width="80" height="80" rx="18" fill="#1e1338"/><path d="M50 3q4 10 12 17l4 4 1-5q8 12 8 24-2 28-34 31Q8 72 5 43q-1-10 5-18l6-11q2 7 5 8l8-4q-2 6 0 9l11-4V18z" fill="url(#gFox)"/><circle cx="39" cy="41" r="16" fill="url(#gFoxIn)"/><path d="M15 33q7-3 13 0l10 2q-3 6-9 6-5 3-4 9-9-4-10-17z" fill="#f7a33f"/></svg></div>
  <div class="rule"></div>
  <div class="app on"><svg viewBox="0 0 80 84" class="tall"><use href="#notion"/></svg></div>
  <div class="app on"><svg><use href="#vscode"/></svg></div>
  <div class="app on"><svg viewBox="0 0 80 80"><rect width="80" height="80" rx="18" fill="url(#gTerm)"/><rect x="3" y="3" width="74" height="74" rx="15" fill="#000"/><rect x="9" y="9" width="62" height="62" rx="9" fill="#262626"/><path d="M15 16l9 5-9 5M28 30.500h11" fill="none" stroke="#f2f2f2" stroke-width="2.600"/></svg></div>
  <div class="app on"><svg viewBox="0 0 88 88" class="pc"><rect x="10" y="10" width="68" height="68" rx="15" fill="url(#gPc)" transform="rotate(45 44 44)"/><rect x="23" y="23" width="42" height="42" fill="#000"/><text x="27" y="44" font-family="Lato, sans-serif" font-weight="700" font-size="22" textLength="31" fill="#fff">PC</text><path d="M28 58.500h16" stroke="#fff" stroke-width="2.800"/></svg></div>
  <div class="rule"></div>
  <div class="mini"><svg width="92" height="64" viewBox="0 0 92 64"><rect width="92" height="64" fill="#17181a"/><rect width="26" height="64" fill="#101113"/><path d="M6 8h6M6 12h9M6 16h5M6 20h7M6 24h5" stroke="#555b60"/><path d="M30 6h8M30 10h6M30 20h9M34 24h16M34 28h22M34 34h14M30 38h18M30 44h8M34 48h18M34 54h10" stroke="#7a6a58"/><path d="M30 16h18M34 31h48M34 36h30M34 58h18" stroke="#35608c"/></svg><svg class="sub" width="30" height="30"><use href="#vscode"/></svg></div>
  <div class="mini"><svg width="91" height="60" viewBox="0 0 91 60"><rect width="91" height="60" fill="#151515"/><rect width="22" height="60" fill="#202020"/><rect x="22" y="2" width="69" height="19" fill="#2c5596"/><path d="M22 6q10-4 20 0t18 0M50 9q10-3 18 0" fill="none" stroke="#7ea6dc" stroke-width="1.500"/><path d="M22 15q12-3 24 1t24-2V8h21v13H22z" fill="#131d38"/><path d="M40 19l4-5 4 3 5-4 5 4 4-2v5z" fill="#93718f"/><rect x="34" y="17" width="5" height="6" fill="#fff"/><path d="M34 26h16" stroke="#ddd" stroke-width="1.600"/><path d="M34 35h10M34 39h14M34 46h8M34 50h14M34 54h12M3 10h8M3 18h10M3 22h9M3 26h8M3 30h10M3 34h8" stroke="#666"/></svg><svg class="sub n" width="30" height="32"><use href="#notion"/></svg></div>
  <div class="mini"><svg width="91" height="64" viewBox="0 0 91 64"><rect width="91" height="64" fill="#17181a"/><rect width="26" height="64" fill="#101113"/><path d="M7 8h8M7 12h10M7 17h8M7 22h9M7 27h7M7 32h6M7 38h8M7 44h6M7 50h7" stroke="#75654a"/><path d="M30 6h20M30 10h30M30 20h50M30 23h50M30 26h44M30 33h51M30 37h50M30 46h40M30 50h36" stroke="#55595e"/><path d="M1 4h3M1 12h3M0 63h5" stroke="#2b6cc0" stroke-width="2"/></svg><svg class="sub" width="30" height="30"><use href="#vscode"/></svg></div>
  <div class="mini trash"><svg width="72" height="92" viewBox="0 0 72 92"><path d="M5 14l8-10 10-3 10 4 8-4 12 6 10 7-4 10H8z" fill="#d9d9d8"/><path d="M14 16l10-5 8 9H18zM42 9l8-4 6 10-10 7z" fill="#43352f"/><path d="M24 9l8-2 2 5-8 1z" fill="#4fc2d6"/><path d="M44 12l7 3-4 5z" fill="#b1492f"/><path d="M1 12q4 10 35 10t35-10l-9 72q-3 6-26 7-22-1-26-7z" fill="url(#gTrash)"/><path d="M1 12q5 8 35 9 30-1 35-9M9 78q6 7 27 7t27-7" fill="none" stroke="#bfc3c4" stroke-width="1.600"/></svg></div>
</footer>
</body>
</html>
```
FILE: styles.css
```css
* { box-sizing: border-box; }
body {
  margin: 0;
  width: 3024px;
  height: 1964px;
  position: relative;
  overflow: hidden;
  background: #0b0a0c;
  font-family: Inter, "Liberation Sans", sans-serif;
}
.defs { position: absolute; }
.wallpaper { position: absolute; inset: 0; width: 3024px; height: 1964px; }
.back-window {
  position: absolute;
  left: -2px;
  top: 1700px;
  width: 2963px;
  height: 223px;
  background: #06080b;
  border: 2px solid #35393c;
  border-radius: 22px;
}

/* menu bar */
.menubar {
  position: relative;
  height: 74px;
  padding: 0 0 2px 39px;
  display: grid;
  grid-template-columns: 68px 142px 85px 87px 101px 127px 177px 132px 84px 138px 828px 64px 78px 70px 89px 57px 67px 90px 74px 66px 63px 61px 132px 1fr;
  align-items: center;
  background: linear-gradient(90deg, #5b635d 0, #667670 420px, #748a86 1000px, #78928f 1500px, #6f8783 1850px, #687b77 2150px, #5b6c68 2450px, #50564f 2800px, #4b4e47 3024px);
  color: #fff;
  font-size: 26px;
  font-weight: 500;
  letter-spacing: -0.5px;
  white-space: nowrap;
  text-shadow: 0 3px 6px rgba(0, 0, 0, .3);
}
.menubar svg { filter: drop-shadow(0 2px 3px rgba(0, 0, 0, .25)); overflow: visible; }
.menubar b { font-weight: 700; letter-spacing: 0; }
.m-apple { margin-top: -3px; }
.clock { letter-spacing: 1.300px; }
.input-key {
  width: 44px;
  height: 32px;
  border-radius: 5px;
  background: #eef0ef;
  color: #56635f;
  font-size: 25px;
  font-weight: 700;
  line-height: 32px;
  text-align: center;
  text-shadow: none;
}
.percent { font-size: 22px; letter-spacing: -0.3px; }

/* browser window */
.window {
  position: absolute;
  left: 2px;
  top: 76px;
  width: 3022px;
  height: 1746px;
  border-radius: 20px 20px 24px 24px;
  overflow: hidden;
  background: #fff;
  box-shadow: 0 0 0 2px #050505;
}
.tabstrip {
  height: 100px;
  margin-bottom: -20px;
  padding: 12px 12px 20px 42px;
  display: flex;
  background: #d2e8c2;
  box-shadow: inset 0 2px 0 #e3f0da;
}
.lights { display: flex; gap: 16px; padding-top: 17px; width: 142px; }
.lights i { width: 24px; height: 24px; border-radius: 50%; }
.red { background: #ed6a5e; }
.amber { background: #f4be4f; }
.green { background: #61c454; }
.tab {
  position: relative;
  width: 464px;
  height: 68px;
  padding: 0 23px 13px 16px;
  border-radius: 20px 20px 0 0;
  background: #fff;
  display: flex;
  align-items: center;
  font-size: 24px;
  color: #1f2023;
}
.tab span { margin-left: 16px; }
.tab::before, .tab::after {
  content: "";
  position: absolute;
  bottom: 0;
  width: 24px;
  height: 24px;
}
.tab::before { left: -24px; background: radial-gradient(circle at 0 0, transparent 23.500px, #fff 24px); }
.tab::after { right: -24px; background: radial-gradient(circle at 100% 0, transparent 23.500px, #fff 24px); }
.close { margin-left: auto; }
.plus { margin: 17px 0 0 29px; }
.tabsearch {
  margin-left: auto;
  width: 56px;
  height: 56px;
  border-radius: 20px;
  background: #fff;
  display: grid;
  place-items: center;
}
.toolbar {
  position: relative;
  height: 92px;
  padding-left: 8px;
  display: flex;
  align-items: center;
  background: #fff;
  border-radius: 20px 20px 0 0;
}
.slot { width: 72px; flex: none; display: flex; justify-content: center; align-items: center; }
.omnibox {
  width: 1570px;
  height: 68px;
  margin: 0 16px;
  padding: 0 28px 0 10px;
  flex: none;
  border-radius: 34px;
  background: #e1e1e1;
  display: flex;
  align-items: center;
}
.info { width: 48px; height: 48px; border-radius: 50%; background: #fff; display: grid; place-items: center; }
.url { margin-left: 16px; font-size: 28px; letter-spacing: 0.100px; color: #1f2023; }
.url em { font-style: normal; color: #5f6368; }
.star { margin-left: auto; }
.puzzle { margin-left: 3px; margin-top: -2px; }
.pbox { width: 32px; height: 32px; background: #868686; color: #fff; font-size: 24px; line-height: 32px; text-align: center; }
.divider { width: 4px; height: 32px; margin: 0 16px; border-radius: 2px; background: #d2e8c2; }
.round { border-radius: 50%; }
.bookmarks {
  height: 70px;
  padding: 0 0 12px 26px;
  border-bottom: 2px solid #cdcdcd;
  display: grid;
  grid-template-columns: 293px 308px 304px 291px 301px 298px 307px 301px 1fr;
  align-items: center;
}
.bookmarks a { display: flex; align-items: center; gap: 11px; font-size: 24px; letter-spacing: -0.140px; color: #1f2023; white-space: nowrap; }
.bookmarks i { width: 31px; }

/* page */
.page { display: flex; flex-direction: column; align-items: center; }
h1 { margin: 8px 0 0; font-size: 49px; line-height: 60px; font-weight: 400; letter-spacing: -1.980px; color: #212529; }
.start {
  margin-top: 31px;
  width: 356px;
  height: 76px;
  border: 2px solid #2760c6;
  border-radius: 8px;
  background: #2c66d1;
  box-shadow: 0 0 0 7px #a3c6fb;
  color: #fff;
  font: 400 31px Inter, sans-serif;
  letter-spacing: 0;
  white-space: nowrap;
}
.viewer {
  position: relative;
  width: 1304px;
  height: 660px;
  margin-top: 68px;
  overflow: hidden;
  font: 24px/48px "Open Sans", "Noto Sans", sans-serif;
  color: #666;
}
.grip { position: absolute; left: -1px; top: 15px; }
.table { width: 560px; }
.row { display: grid; grid-template-columns: 79px 172px 169px 140px; height: 48px; }
.row > * { padding: 0 0 0 10px; font-weight: 400; }
.row > :nth-child(2) { padding: 0 11px 0 0; text-align: right; }
.row > :nth-child(3) { padding: 0 10px 0 0; text-align: right; }
.row b { color: #2f75cf; }
.head { height: 62px; line-height: 63px; position: relative; box-shadow: 0 2px 0 #9c9c9c; }
.thumb { position: absolute; right: -1px; top: 4px; width: 15px; height: 40px; border-radius: 8px; background: #d6d6d6; }
.dock-shade {
  position: absolute;
  left: 40px;
  right: 20px;
  bottom: 0;
  height: 100px;
  background: linear-gradient(180deg, rgba(0, 0, 0, 0), rgba(0, 0, 0, .035) 45%, rgba(0, 0, 0, .13));
  -webkit-mask-image: linear-gradient(90deg, transparent, #000 130px, #000 calc(100% - 240px), transparent);
  mask-image: linear-gradient(90deg, transparent, #000 130px, #000 calc(100% - 240px), transparent);
}

/* dock */
.dock {
  position: absolute;
  left: 88px;
  top: 1826px;
  width: 2848px;
  height: 128px;
  padding: 17px 0 0 4.600px;
  display: flex;
  border: 2px solid #4b4f4e;
  border-radius: 38px;
  background: linear-gradient(90deg, #2b2a28 0, #252627 500px, #2a2a29 900px, #212a2b 1350px, #202a2b 1750px, #242223 2050px, #222c2d 2400px, #271f22 2750px, #241f21);
}
.app { position: relative; width: 105.450px; flex: none; display: flex; justify-content: center; align-items: flex-start; }
.app > svg { width: 80px; height: 80px; flex: none; overflow: visible; }
.app > .wide { width: 86px; height: 86px; margin-right: -6px; }
.app > .tall { height: 84px; margin-top: -2px; }
.app > .pc { width: 88px; height: 88px; margin-top: -4px; }
.petals rect { mix-blend-mode: multiply; }
.app.on::after {
  content: "";
  position: absolute;
  left: calc(50% - 5px);
  top: 97px;
  width: 8px;
  height: 8px;
  border-radius: 50%;
  background: #a5a6a5;
}
.badge {
  position: absolute;
  left: 67px;
  top: -9px;
  width: 38px;
  height: 38px;
  border-radius: 50%;
  background: #e8503f;
  color: #fff;
  font-size: 21px;
  line-height: 38px;
  text-align: center;
  letter-spacing: -0.5px;
}
.rule { width: 2px; height: 96px; margin: -3px 22.800px 0; background: #616564; flex: none; }
.mini { position: relative; width: 106px; flex: none; display: flex; justify-content: center; padding-top: 9px; }
.sub { position: absolute; right: 9px; top: 54px; }
.trash { padding-top: 0; margin-top: -8px; }
```
